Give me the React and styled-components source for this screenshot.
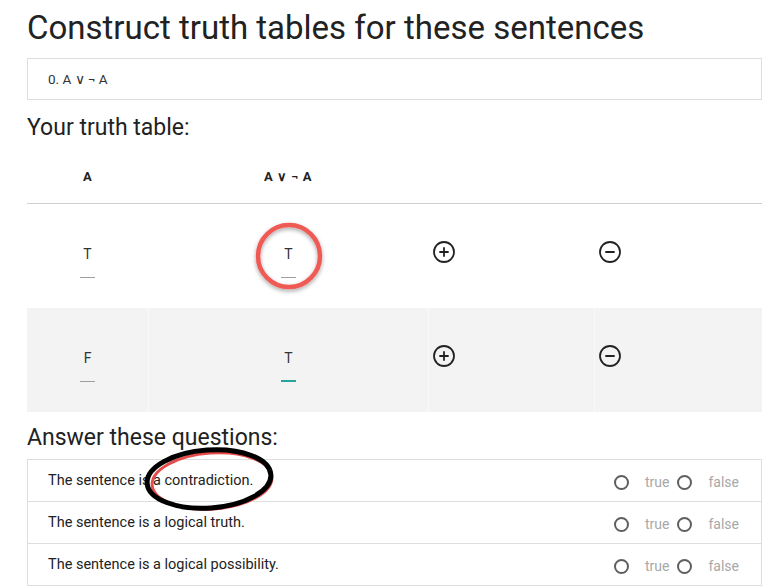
import React from 'react'
import styled, { createGlobalStyle } from 'styled-components'
import { CirclePlus, CircleMinus } from 'lucide-react'

const GlobalStyle = createGlobalStyle`
  body {
    margin: 0;
    background: #fff;
    font-family: Roboto, "Liberation Sans", sans-serif;
    color: #212121;
  }
`

const Page = styled.div`
  position: relative;
  padding: 8px 10px 0 27px;
`

const Title = styled.h1`
  margin: 0;
  font-size: 33px;
  font-weight: 400;
  line-height: 40px;
  color: #222;
`

const SentenceBox = styled.div`
  margin-top: 10px;
  height: 42px;
  box-sizing: border-box;
  border: 1px solid #dedede;
  display: flex;
  align-items: center;
  padding-left: 20px;
  font-size: 13.5px;
  color: #333;
`

const Heading = styled.h2`
  margin: 14px 0 0;
  font-size: 23px;
  font-weight: 400;
  line-height: 28px;
  color: #222;
`

const Table = styled.div`
  display: flex;
  flex-direction: column;
`

const HeaderRow = styled.div`
  display: grid;
  grid-template-columns: 121px 280px 166px 1fr;
  height: 62px;
  border-bottom: 1px solid #d0d0d0;
  align-items: center;
  padding-top: 8px;
  box-sizing: border-box;
`

const HeadCell = styled.div`
  text-align: center;
  font-size: 13px;
  font-weight: 700;
  color: #222;
  letter-spacing: 0.5px;
`

const Row = styled.div`
  display: grid;
  grid-template-columns: 121px 280px 166px 1fr;
  height: 104px;
`

const Cell = styled.div`
  background: ${p => (p.$shade ? '#f3f3f3' : '#fff')};
  border-left: 1px solid ${p => (p.$shade ? '#f8f8f8' : '#fff')};
  display: flex;
  flex-direction: column;
  align-items: ${p => (p.$icon ? 'flex-start' : 'center')};
  padding: ${p => (p.$icon ? '36px 0 0 3px' : '42px 0 0')};
  box-sizing: border-box;
  &:first-child {
    border-left: none;
  }
`

const Value = styled.span`
  font-size: 14px;
  line-height: 16px;
  color: #333;
`

const Underline = styled.span`
  margin-top: ${p => (p.$active ? '14px' : '15px')};
  width: 15px;
  height: ${p => (p.$active ? '2px' : '1px')};
  background: ${p => (p.$active ? '#26a69a' : '#9e9e9e')};
`

const IconButton = styled.span`
  display: flex;
  color: #222;
`

const QuestionHeading = styled(Heading)`
  margin-top: 12px;
`

const Questions = styled.div`
  margin-top: 7px;
  border: 1px solid #dedede;
`

const Question = styled.div`
  display: flex;
  align-items: center;
  justify-content: space-between;
  height: 41px;
  padding: 0 22px 0 20px;
  font-size: 14.5px;
  color: #222;
  & + & {
    border-top: 1px solid #dedede;
  }
`

const Options = styled.div`
  display: flex;
  align-items: center;
  padding-top: 3px;
`

const Radio = styled.span`
  width: 15px;
  height: 15px;
  box-sizing: border-box;
  border: 2px solid #5f5f5f;
  border-radius: 50%;
`

const RadioLabel = styled.span`
  margin: 0 8px 0 16px;
  font-size: 14px;
  color: #a8a8a8;
  &:last-child {
    margin-right: 0;
  }
`

const Annotations = styled.svg`
  position: absolute;
  left: 0;
  top: 0;
  pointer-events: none;
`

const rows = [
  { a: 'T', s: 'T', active: false },
  { a: 'F', s: 'T', active: true }
]

const questions = [
  'The sentence is a contradiction.',
  'The sentence is a logical truth.',
  'The sentence is a logical possibility.'
]

export default function App() {
  return (
    <>
      <GlobalStyle />
      <Page>
        <Title>Construct truth tables for these sentences</Title>
        <SentenceBox>0. A ∨ ¬ A</SentenceBox>
        <Heading>Your truth table:</Heading>
        <Table>
          <HeaderRow>
            <HeadCell>A</HeadCell>
            <HeadCell>A ∨ ¬ A</HeadCell>
            <div />
            <div />
          </HeaderRow>
          {rows.map((r, i) => (
            <Row key={i}>
              <Cell $shade={i % 2 === 1}>
                <Value>{r.a}</Value>
                <Underline />
              </Cell>
              <Cell $shade={i % 2 === 1}>
                <Value>{r.s}</Value>
                <Underline $active={r.active} />
              </Cell>
              <Cell $shade={i % 2 === 1} $icon>
                <IconButton><CirclePlus size={24} strokeWidth={1.8} /></IconButton>
              </Cell>
              <Cell $shade={i % 2 === 1} $icon>
                <IconButton><CircleMinus size={24} strokeWidth={1.8} /></IconButton>
              </Cell>
            </Row>
          ))}
        </Table>
        <QuestionHeading>Answer these questions:</QuestionHeading>
        <Questions>
          {questions.map(q => (
            <Question key={q}>
              <span>{q}</span>
              <Options>
                <Radio />
                <RadioLabel>true</RadioLabel>
                <Radio />
                <RadioLabel>false</RadioLabel>
              </Options>
            </Question>
          ))}
        </Questions>
        <Annotations width="772" height="588">
          <defs>
            <filter id="shadow" x="-30%" y="-30%" width="160%" height="160%">
              <feDropShadow dx="0" dy="2" stdDeviation="2" floodColor="#000" floodOpacity="0.35" />
            </filter>
          </defs>
          <circle cx="289" cy="256" r="31" fill="none" stroke="#ef5a55" strokeWidth="4.5" filter="url(#shadow)" />
          <ellipse cx="212" cy="481" rx="60" ry="28" fill="none" stroke="#e84a4a" strokeWidth="3" transform="rotate(-4 212 481)" />
          <ellipse cx="209" cy="479" rx="62" ry="29" fill="none" stroke="#000" strokeWidth="5" transform="rotate(-4 209 479)" />
        </Annotations>
      </Page>
    </>
  )
}
